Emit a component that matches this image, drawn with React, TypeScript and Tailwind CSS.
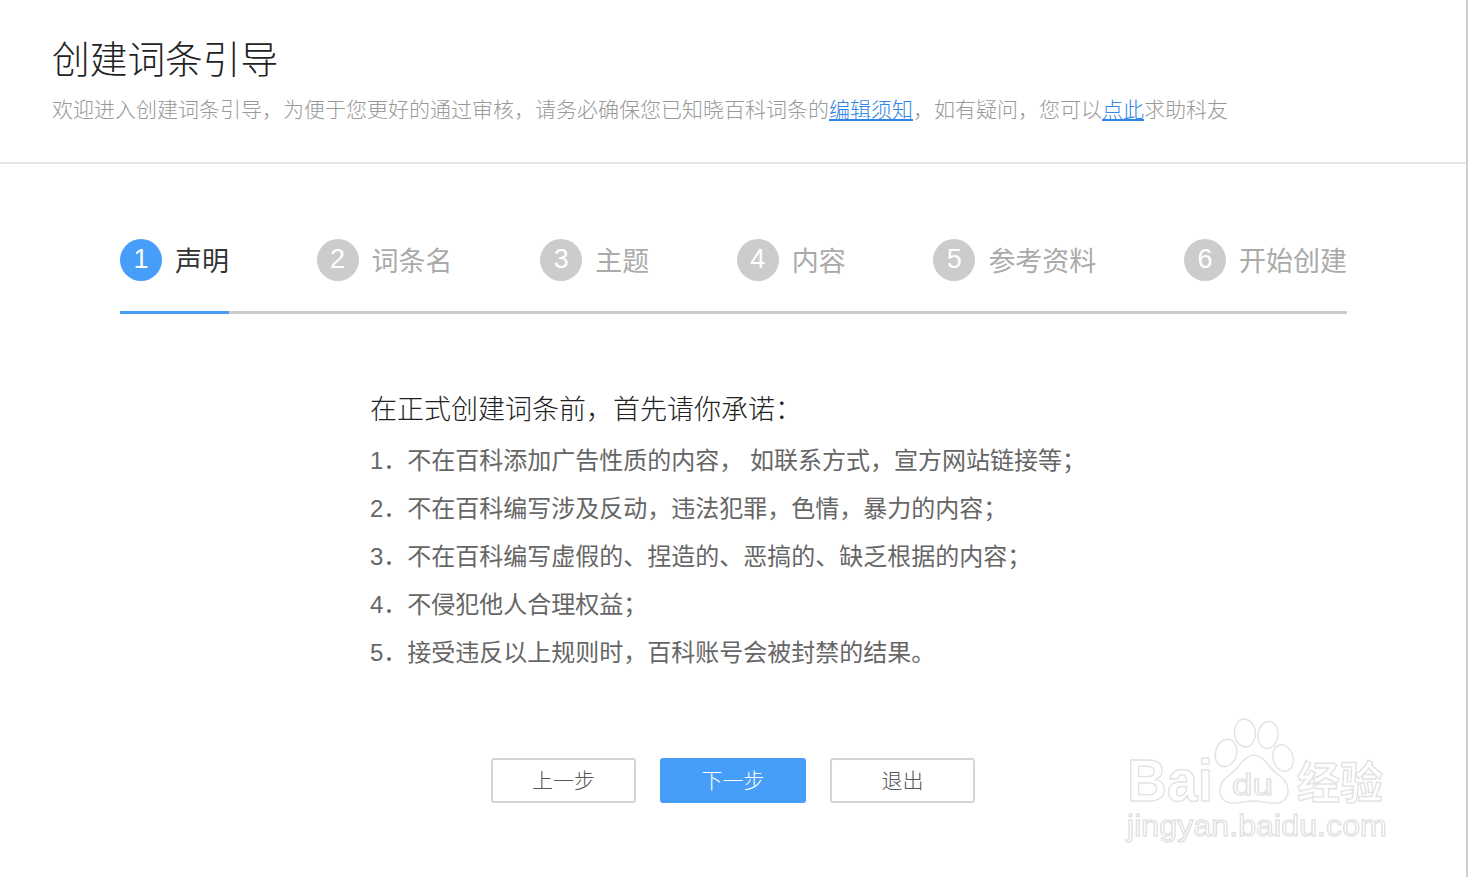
const steps = ["声明", "词条名", "主题", "内容", "参考资料", "开始创建"];

const rules = [
  "不在百科添加广告性质的内容， 如联系方式，宣方网站链接等；",
  "不在百科编写涉及反动，违法犯罪，色情，暴力的内容；",
  "不在百科编写虚假的、捏造的、恶搞的、缺乏根据的内容；",
  "不侵犯他人合理权益；",
  "接受违反以上规则时，百科账号会被封禁的结果。",
];

const Watermark = () => (
  <svg
    width="270"
    height="130"
    viewBox="0 0 270 130"
    className="absolute left-[1124px] top-[718px] blur-[0.4px]"
    fontFamily="'Liberation Sans','Noto Sans CJK SC',sans-serif"
    fill="#fff"
    stroke="#e2e2e2"
    strokeWidth="1.4"
  >
    <ellipse cx="121" cy="15" rx="10.5" ry="14" transform="rotate(-5 121 15)" />
    <ellipse cx="144" cy="17" rx="10" ry="13.5" transform="rotate(8 144 17)" />
    <ellipse cx="102" cy="35" rx="10.5" ry="14" transform="rotate(15 102 35)" />
    <ellipse cx="159" cy="40" rx="10" ry="13.5" transform="rotate(-15 159 40)" />
    <path d="M130 37c-7 0-12 7-17 13-4 5-10 8-14 13-6 9-3 20 7 22 8 1 16-2 24-2s16 3 24 2c10-2 13-13 7-22-4-5-10-8-14-13-5-6-10-13-17-13z" />
    <text x="3" y="83" fontSize="60" fontWeight="700" textLength="86" lengthAdjust="spacingAndGlyphs">Bai</text>
    <text x="108" y="77" fontSize="29" textLength="41" lengthAdjust="spacingAndGlyphs">du</text>
    <text x="173" y="81" fontSize="44" fontWeight="700" textLength="86" lengthAdjust="spacingAndGlyphs">经验</text>
    <text x="3" y="118" fontSize="30" textLength="260" lengthAdjust="spacingAndGlyphs">jingyan.baidu.com</text>
  </svg>
);

const App = () => {
  return (
    <div className="relative h-[877px] w-[1468px] overflow-hidden border-r-2 border-[#cfcfcf] bg-white font-['Liberation_Sans','Noto_Sans_CJK_SC',sans-serif] font-light">
      <header className="h-[164px] border-b-2 border-[#e5e5e5] px-[52px] pt-[35px]">
        <h1 className="text-[37.7px] leading-[50px] font-light text-[#222]">创建词条引导</h1>
        <p className="mt-[12px] text-[21px] leading-[26px] text-[#999]">
          欢迎进入创建词条引导，为便于您更好的通过审核，请务必确保您已知晓百科词条的
          <a className="text-[#2f86e6] underline">编辑须知</a>
          ，如有疑问，您可以
          <a className="text-[#2f86e6] underline">点此</a>
          求助科友
        </p>
      </header>

      <div className="ml-[120px] mt-[75px] w-[1227px]">
        <div className="flex justify-between">
          {steps.map((s, i) => (
            <div key={s} className="flex items-center gap-[13px]">
              <span
                className={`flex h-[42px] w-[42px] items-center justify-center rounded-full pb-[2px] text-[27px] text-white ${
                  i === 0 ? "bg-[#469ef8]" : "bg-[#cccccc]"
                }`}
              >
                {i + 1}
              </span>
              <span className={`h-[42px] text-[27px] leading-[46px] font-normal ${i === 0 ? "text-[#333]" : "text-[#aaa]"}`}>{s}</span>
            </div>
          ))}
        </div>
        <div className="mt-[30px] h-[3px] bg-[#cccccc]">
          <div className="h-[3px] w-[109px] bg-[#469ef8]" />
        </div>
      </div>

      <div className="ml-[370px] mt-[76px]">
        <h2 className="text-[27px] leading-[40px] font-light text-[#222]">在正式创建词条前，首先请你承诺：</h2>
        <ol className="mt-[7px] text-[24px] leading-[48px] font-normal text-[#666]">
          {rules.map((r, i) => (
            <li key={r}>
              {i + 1}．{r}
            </li>
          ))}
        </ol>
      </div>

      <div className="mt-[81px] ml-[491px] flex gap-[24px] text-[21px]">
        <button className="h-[45px] w-[145px] rounded-[3px] border-2 border-[#d5d5d5] text-[#555]">上一步</button>
        <button className="h-[45px] w-[146px] rounded-[3px] bg-[#469ef8] text-white">下一步</button>
        <button className="h-[45px] w-[145px] rounded-[3px] border-2 border-[#d5d5d5] text-[#555]">退出</button>
      </div>

      <Watermark />
    </div>
  );
};

export default App;
